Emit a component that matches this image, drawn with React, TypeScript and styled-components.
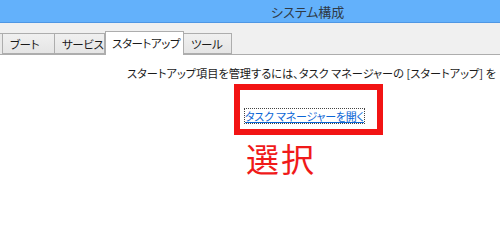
import React from "react";
import styled, { createGlobalStyle } from "styled-components";

const Global = createGlobalStyle`
  html, body { margin: 0; padding: 0; background: #ffffff; }
  body {
    font-family: "Noto Sans CJK JP", "Noto Sans", sans-serif;
    font-feature-settings: "palt";
    overflow: hidden;
  }
`;

const Window = styled.div`
  width: 500px;
  height: 244px;
  display: flex;
  flex-direction: column;
  background: #ffffff;
  overflow: hidden;
`;

const TitleBar = styled.div`
  height: 22px;
  background: #63b1fb;
  border-bottom: 1px solid #4f97e4;
  display: flex;
  align-items: center;
  padding-left: 271px;
  box-sizing: content-box;
`;

const Title = styled.span`
  font-size: 13px;
  color: #2f3a46;
  line-height: 1;
`;

const TabBand = styled.div`
  height: 31px;
  background: #f0f0f0;
  display: flex;
  align-items: flex-end;
  border-bottom: 1px solid #adadad;
`;

const Tab = styled.div<{ $w: number; $active?: boolean }>`
  width: ${(p) => p.$w}px;
  height: ${(p) => (p.$active ? 24 : 21)}px;
  margin-bottom: ${(p) => (p.$active ? -1 : 0)}px;
  box-sizing: border-box;
  border: 1px solid #adadad;
  border-bottom: ${(p) => (p.$active ? "none" : "1px solid #adadad")};
  border-left: ${(p) => (p.$active ? "1px solid #adadad" : "none")};
  background: ${(p) => (p.$active ? "#ffffff" : "linear-gradient(#f0f0f0, #e5e5e5)")};
  font-size: 11.5px;
  letter-spacing: -0.4px;
  color: #1a1a1a;
  display: flex;
  align-items: center;
  padding-left: ${(p) => (p.$active ? 6 : 7)}px;
  padding-bottom: ${(p) => (p.$active ? 2 : 0)}px;
  white-space: nowrap;
  overflow: hidden;
  position: relative;
  z-index: ${(p) => (p.$active ? 1 : 0)};
`;

const EdgeTab = styled.div`
  width: 3px;
  height: 21px;
  box-sizing: border-box;
  background: #e9e9e9;
  border-top: 1px solid #adadad;
  border-right: 1px solid #adadad;
`;

const Content = styled.div`
  display: flex;
  flex-direction: column;
  padding-top: 10px;
`;

const Message = styled.div`
  padding-left: 127px;
  font-size: 11.2px;
  color: #1a1a1a;
  white-space: nowrap;
  line-height: 16px;
`;

const Highlight = styled.div`
  margin-top: 3px;
  margin-left: 234px;
  width: 149px;
  height: 51px;
  box-sizing: border-box;
  border: 6px solid #f21414;
  padding: 12px 0 0 5px;
`;

const TaskLink = styled.a`
  display: inline-block;
  font-size: 11px;
  line-height: 14px;
  letter-spacing: -0.2px;
  color: #0b66d6;
  text-decoration: underline;
  outline: 1px dotted #444;
  white-space: nowrap;
`;

const Caption = styled.div`
  margin-left: 246px;
  margin-top: 3px;
  font-size: 33px;
  line-height: 40px;
  color: #f01a1a;
  letter-spacing: 2px;
`;

export default function App() {
  return (
    <>
      <Global />
      <Window>
        <TitleBar>
          <Title>システム構成</Title>
        </TitleBar>
        <TabBand>
          <EdgeTab />
          <Tab $w={52}>ブート</Tab>
          <Tab $w={50}>サービス</Tab>
          <Tab $w={79} $active>スタートアップ</Tab>
          <Tab $w={48}>ツール</Tab>
        </TabBand>
        <Content>
          <Message>スタートアップ項目を管理するには、タスク マネージャーの [スタートアップ] を</Message>
          <Highlight>
            <TaskLink href="#">タスク マネージャーを開く</TaskLink>
          </Highlight>
          <Caption>選択</Caption>
        </Content>
      </Window>
    </>
  );
}
